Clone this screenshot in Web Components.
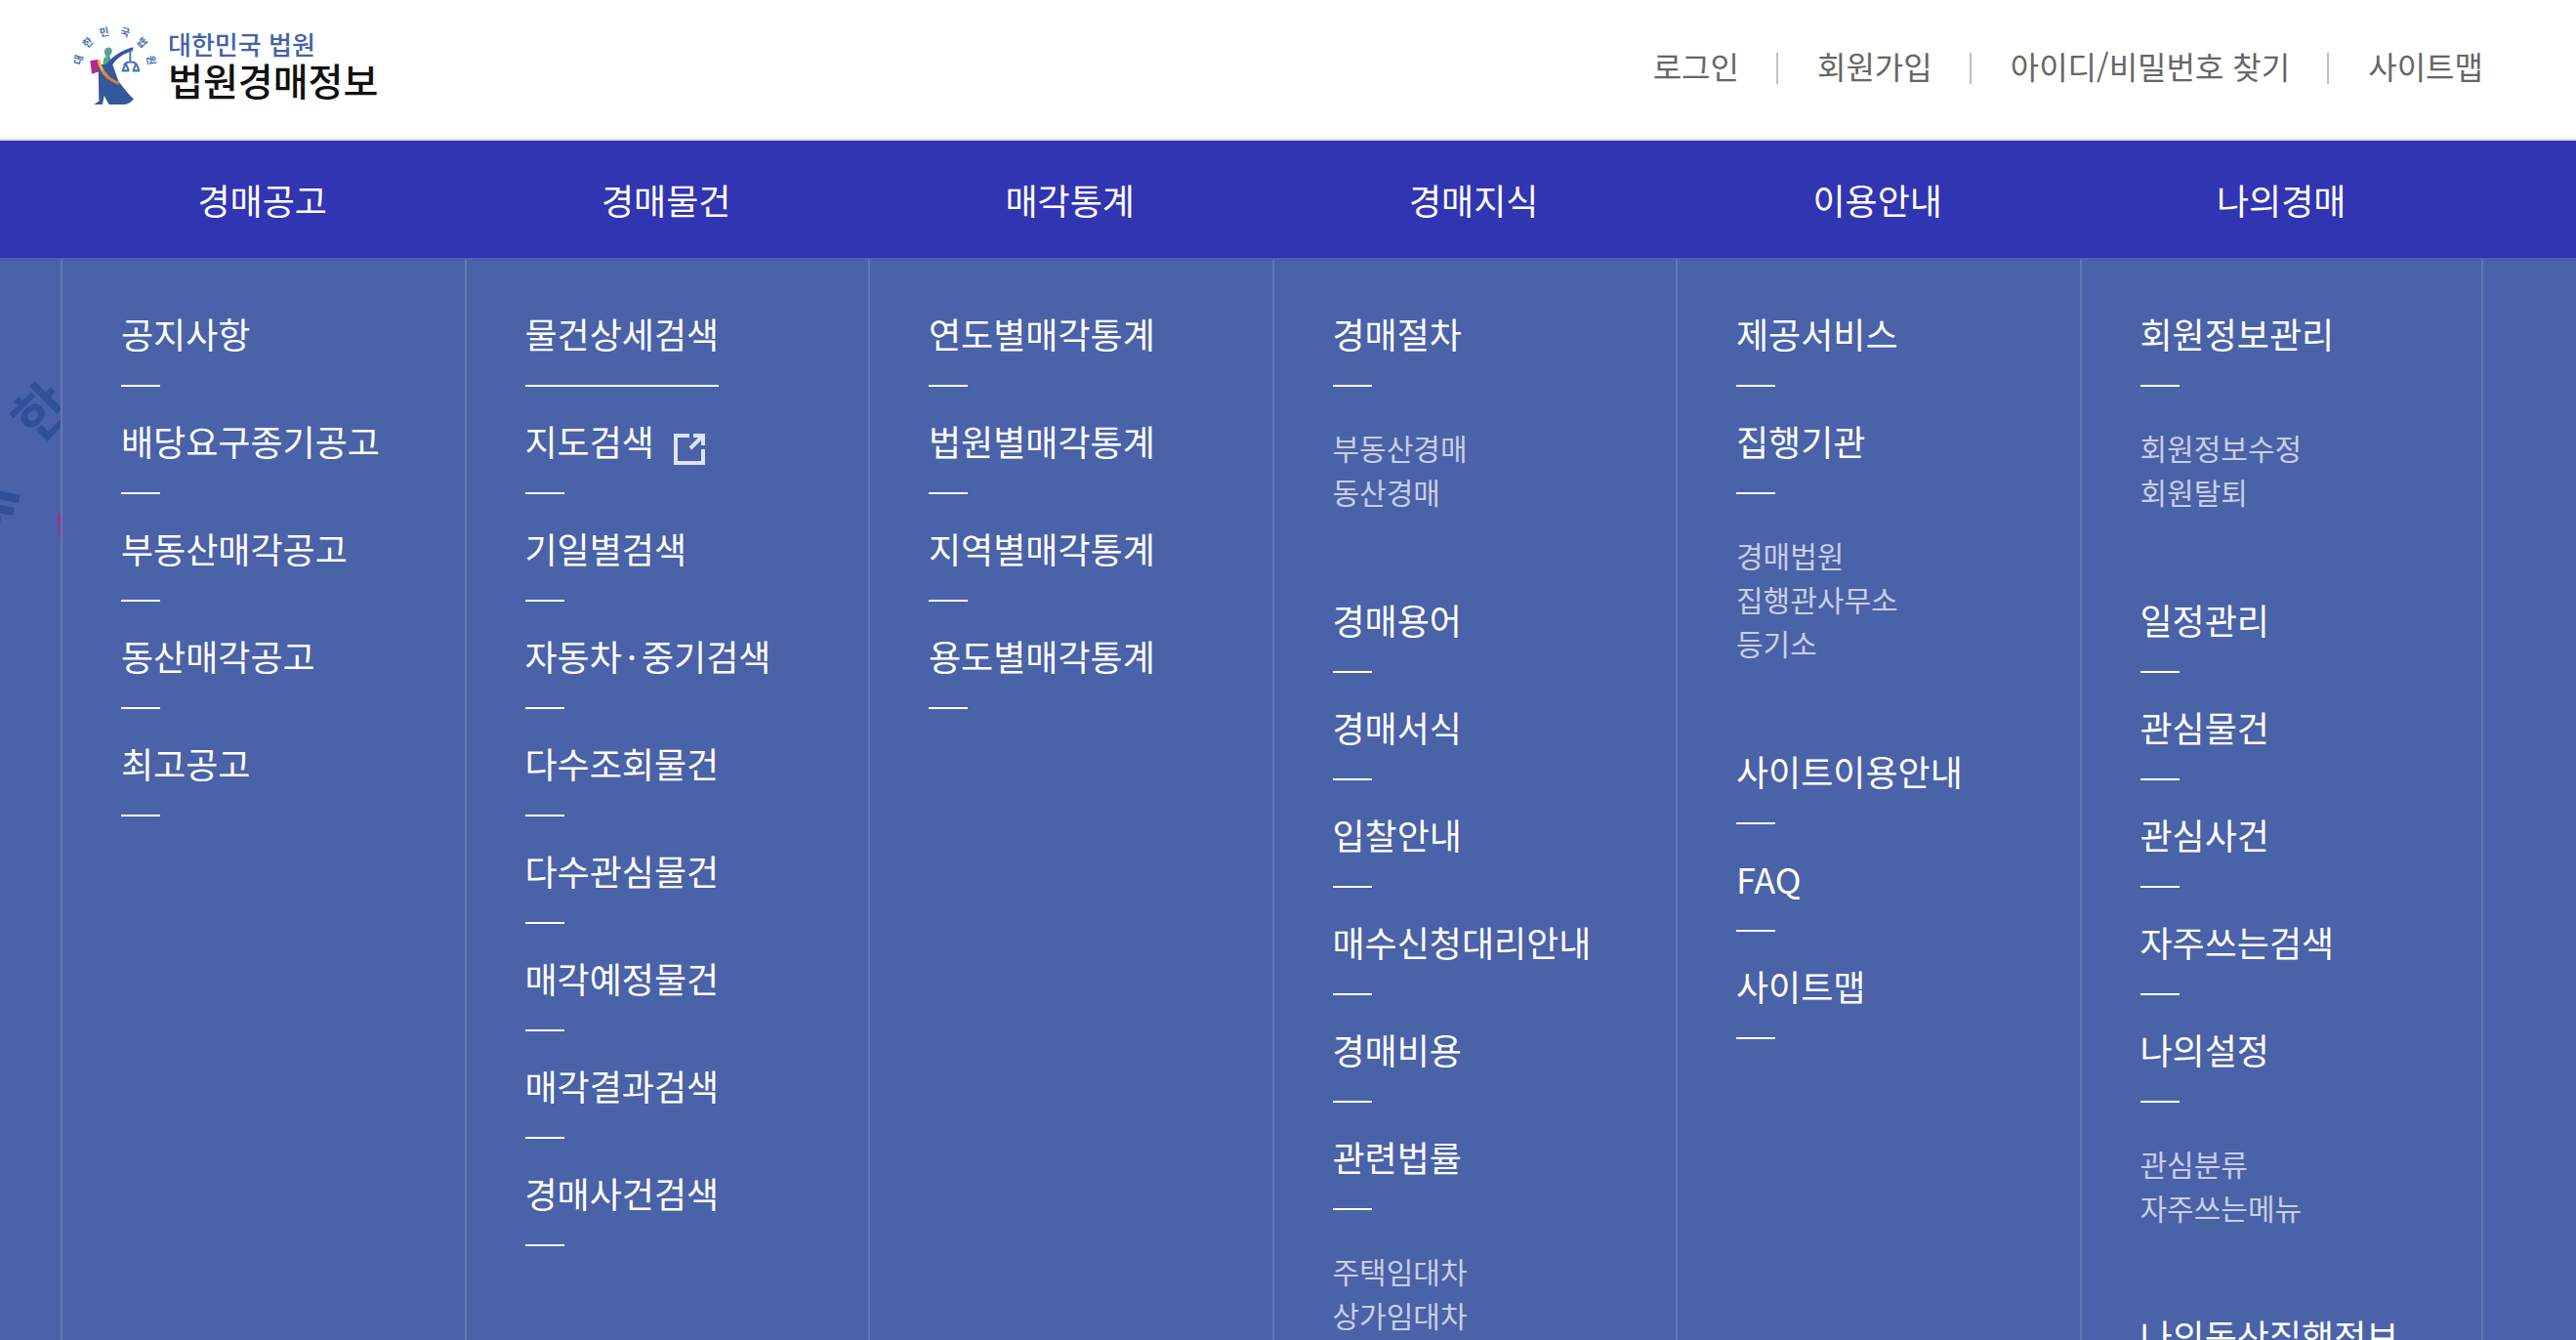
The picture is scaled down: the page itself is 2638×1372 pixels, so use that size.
<!DOCTYPE html>
<html lang="ko">
<head>
<meta charset="utf-8">
<title>법원경매정보</title>
<style>
  html, body {
    margin: 0;
    height: 100%;
  }

  body {
    --gutter-left: 62px;
    --gutter-right: 95px;
    --panel: #4a62a8;
    display: flex;
    flex-direction: column;
    overflow: hidden;
    background: #fff;
    font-family: "Noto Sans CJK KR", sans-serif;
  }
</style>
</head>
<body>
  <site-header>
    <court-logo slot="logo"></court-logo>
    <a href="#">로그인</a>
    <a href="#">회원가입</a>
    <a href="#">아이디/비밀번호 찾기</a>
    <a href="#">사이트맵</a>
  </site-header>

  <gnb-bar>
    <a href="#">경매공고</a>
    <a href="#">경매물건</a>
    <a href="#">매각통계</a>
    <a href="#">경매지식</a>
    <a href="#">이용안내</a>
    <a href="#">나의경매</a>
  </gnb-bar>

  <gnb-panel>
    <menu-column>
      <menu-item label="공지사항"></menu-item>
      <menu-item label="배당요구종기공고"></menu-item>
      <menu-item label="부동산매각공고"></menu-item>
      <menu-item label="동산매각공고"></menu-item>
      <menu-item label="최고공고"></menu-item>
    </menu-column>
    <menu-column>
      <menu-item label="물건상세검색" active></menu-item>
      <menu-item label="지도검색" external></menu-item>
      <menu-item label="기일별검색"></menu-item>
      <menu-item label="자동차·중기검색"></menu-item>
      <menu-item label="다수조회물건"></menu-item>
      <menu-item label="다수관심물건"></menu-item>
      <menu-item label="매각예정물건"></menu-item>
      <menu-item label="매각결과검색"></menu-item>
      <menu-item label="경매사건검색"></menu-item>
    </menu-column>
    <menu-column>
      <menu-item label="연도별매각통계"></menu-item>
      <menu-item label="법원별매각통계"></menu-item>
      <menu-item label="지역별매각통계"></menu-item>
      <menu-item label="용도별매각통계"></menu-item>
    </menu-column>
    <menu-column>
      <menu-item label="경매절차">
        <a href="#">부동산경매</a>
        <a href="#">동산경매</a>
      </menu-item>
      <menu-item label="경매용어"></menu-item>
      <menu-item label="경매서식"></menu-item>
      <menu-item label="입찰안내"></menu-item>
      <menu-item label="매수신청대리안내"></menu-item>
      <menu-item label="경매비용"></menu-item>
      <menu-item label="관련법률">
        <a href="#">주택임대차</a>
        <a href="#">상가임대차</a>
      </menu-item>
    </menu-column>
    <menu-column>
      <menu-item label="제공서비스"></menu-item>
      <menu-item label="집행기관">
        <a href="#">경매법원</a>
        <a href="#">집행관사무소</a>
        <a href="#">등기소</a>
      </menu-item>
      <menu-item label="사이트이용안내"></menu-item>
      <menu-item label="FAQ"></menu-item>
      <menu-item label="사이트맵"></menu-item>
    </menu-column>
    <menu-column>
      <menu-item label="회원정보관리">
        <a href="#">회원정보수정</a>
        <a href="#">회원탈퇴</a>
      </menu-item>
      <menu-item label="일정관리"></menu-item>
      <menu-item label="관심물건"></menu-item>
      <menu-item label="관심사건"></menu-item>
      <menu-item label="자주쓰는검색"></menu-item>
      <menu-item label="나의설정">
        <a href="#">관심분류</a>
        <a href="#">자주쓰는메뉴</a>
      </menu-item>
      <menu-item label="나의동산집행정보"></menu-item>
    </menu-column>
  </gnb-panel>

<script>
class BaseElement extends HTMLElement {
  constructor() {
    super();
    const template = document.createElement("template");
    template.innerHTML = this.constructor.html;
    this.attachShadow({ mode: "open" }).appendChild(template.content.cloneNode(true));
  }
}

class SiteHeader extends BaseElement {
  static html = `<style>
    :host {
      display: flex;
      flex: none;
      justify-content: space-between;
      align-items: flex-start;
      box-sizing: border-box;
      height: 144px;
      padding: 24px var(--gutter-right) 0 75px;
      border-bottom: 2px solid #dcdce2;
      background: #fff;
    }

    nav {
      display: flex;
      align-items: center;
      padding-top: 30px;
    }

    ::slotted(a) {
      padding-bottom: 6px;
      color: #666;
      font-size: 32px;
      line-height: 26px;
      text-decoration: none;
      white-space: nowrap;
    }

    ::slotted(a:not(:first-of-type)) {
      margin-left: 38px;
      padding-left: 40px;
      border-left: 2px solid #c0c0c0;
    }
  </style>
  <slot name="logo"></slot>
  <nav aria-label="회원 메뉴"><slot></slot></nav>`;
}

class CourtLogo extends BaseElement {
  static html = `<style>
    :host {
      display: block;
    }

    a {
      display: flex;
      gap: 12px;
      text-decoration: none;
      font-weight: 500;
      white-space: nowrap;
    }

    svg {
      display: block;
      overflow: visible;
      width: 85px;
      height: 84px;
    }

    span {
      display: block;
    }

    .court {
      padding-top: 5px;
      color: #4462a8;
      font-size: 26px;
      line-height: 32px;
    }

    .service {
      color: #111;
      font-size: 39px;
      line-height: 40px;
    }
  </style>
  <a href="#">
    <svg viewBox="75 43 255 252" aria-hidden="true">
      <g fill="#4a72ad" font-size="32" font-weight="700" text-anchor="middle">
        <text transform="translate(102 158) rotate(-75)">대</text>
        <text transform="translate(128 110) rotate(-45)">한</text>
        <text transform="translate(173 81) rotate(-12)">민</text>
        <text transform="translate(231 81) rotate(16)">국</text>
        <text transform="translate(278 110) rotate(46)">법</text>
        <text transform="translate(303 158) rotate(80)">원</text>
      </g>
      <path fill="#58a594" d="M172 123c6-9 20-9 22 1 1 8-2 14-7 17l3 12-12 22-12-8 2-15 8-8c-5-5-7-14-4-21z"/>
      <path fill="#b12a8c" d="M127 158l25-5 8 36-28 9z"/>
      <path fill="#35579c" d="M152 170l24-2c16-19 46-44 84-52l-3 12c-28 8-48 22-61 42l18 50 6 8c14 18 28 36 41 47-6 8-14 14-26 17h-50l-15-27-5 27h-27l16-10z"/>
      <path fill="none" stroke="#f0b646" stroke-width="9" d="M153 155c4 24 14 40 30 54"/>
      <path fill="none" stroke="#d98539" stroke-width="9" d="M164 188c12 20 28 32 52 39"/>
      <g fill="none" stroke="#4a72ad" stroke-width="6">
        <path d="M250 124v38M231 172c4-14 36-14 40 0M236 166l-8 20M236 166l9 20M268 166l-8 20M268 166l9 20"/>
        <path stroke-width="7" d="M224 188h23M257 188h22"/>
      </g>
    </svg>
    <div>
      <span class="court">대한민국 법원</span>
      <span class="service">법원경매정보</span>
    </div>
  </a>`;
}

class GnbBar extends BaseElement {
  static html = `<style>
    :host {
      display: block;
      flex: none;
      padding: 0 var(--gutter-right) 0 var(--gutter-left);
      background: #3135b2;
    }

    nav {
      display: grid;
      grid-template-columns: repeat(6, 1fr);
    }

    ::slotted(a) {
      color: #fff;
      font-size: 36px;
      line-height: 120px;
      text-align: center;
      text-decoration: none;
    }
  </style>
  <nav aria-label="주 메뉴"><slot></slot></nav>`;
}

class GnbPanel extends BaseElement {
  static html = `<style>
    :host {
      display: block;
      position: relative;
      flex: 1;
      min-height: 0;
      overflow: hidden;
      padding: 2px var(--gutter-right) 0 var(--gutter-left);
      background: var(--panel);
    }

    .columns {
      display: grid;
      grid-template-columns: repeat(6, 1fr);
      min-height: 100%;
    }

    /* emblem showing through beside the first column */
    .emblem {
      position: absolute;
      left: 0;
      top: 96px;
      width: var(--gutter-left);
      height: 220px;
    }
  </style>
  <svg class="emblem" viewBox="0 0 62 220" aria-hidden="true">
    <g fill="#30509a" font-size="58" font-weight="700" text-anchor="middle">
      <text transform="translate(57 77) rotate(-45)">한</text>
      <text font-size="66" transform="translate(10 170) rotate(-79)">대</text>
    </g>
    <path fill="#a0307f" d="M62 164c-2 1-3 4-3 8l3 28z"/>
  </svg>
  <div class="columns"><slot></slot></div>`;
}

class MenuColumn extends BaseElement {
  static html = `<style>
    :host {
      display: block;
      padding: 48px 0 0 60px;
      border-left: 2px solid #6478b4;
    }

    :host(:last-of-type) {
      border-right: 2px solid #6478b4;
    }
  </style>
  <slot></slot>`;
}

class MenuItem extends BaseElement {
  static html = `<style>
    :host {
      display: block;
      margin-bottom: 28px;
    }

    .title {
      display: flex;
      align-items: flex-end;
      gap: 20px;
      position: relative;
      width: max-content;
      padding-bottom: 28px;
      color: #fff;
      font-size: 36px;
      line-height: 54px;
      text-decoration: none;
    }

    .title::after {
      content: "";
      position: absolute;
      left: 0;
      bottom: 0;
      width: 40px;
      height: 2px;
      background: #fff;
    }

    :host([active]) .title::after {
      width: 100%;
    }

    .dot {
      padding: 0 5px;
    }

    svg {
      display: none;
      width: 32px;
      height: 32px;
      padding-bottom: 2px;
    }

    :host([external]) svg {
      display: block;
    }

    .sub {
      display: flex;
      flex-direction: column;
      align-items: flex-start;
      margin: 40px 0 81px;
    }

    .sub[hidden] {
      display: none;
    }

    ::slotted(a) {
      color: #c8cfe5;
      font-size: 30px;
      line-height: 45px;
      text-decoration: none;
    }
  </style>
  <a class="title" href="#">
    <span class="label"></span>
    <svg viewBox="0 0 32 32" fill="none" stroke="#dde4f8" stroke-width="4" aria-hidden="true">
      <path d="M16 2H2v28h28V16M20 2h10v10M29 3L17 15"/>
    </svg>
  </a>
  <div class="sub"><slot></slot></div>`;

  connectedCallback() {
    this.shadowRoot.querySelector(".label").innerHTML =
      this.getAttribute("label").replace("·", '<span class="dot">·</span>');
    this.shadowRoot.querySelector(".sub").hidden = !this.children.length;
  }
}

customElements.define("site-header", SiteHeader);
customElements.define("court-logo", CourtLogo);
customElements.define("gnb-bar", GnbBar);
customElements.define("gnb-panel", GnbPanel);
customElements.define("menu-column", MenuColumn);
customElements.define("menu-item", MenuItem);
</script>
</body>
</html>
